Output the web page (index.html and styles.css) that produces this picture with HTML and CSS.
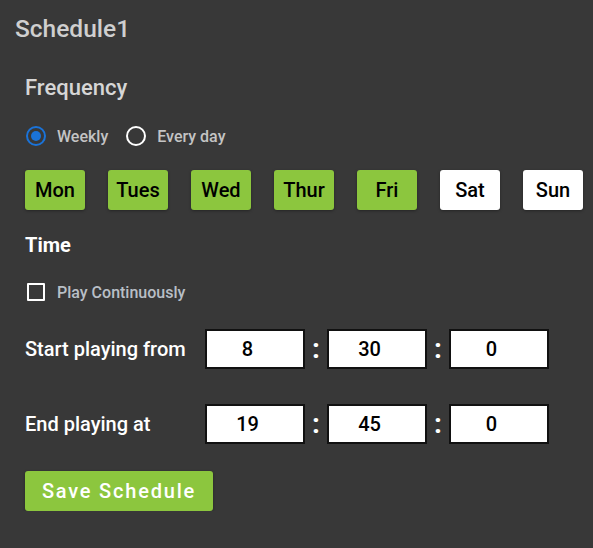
FILE: index.html
```html
<!DOCTYPE html>
<html>
<head>
<meta charset="utf-8">
<link rel="stylesheet" href="styles.css">
</head>
<body>
<div class="page">
  <h1 class="title">Schedule1</h1>
  <div class="content">
    <h2 class="section">Frequency</h2>
    <div class="radios">
      <label class="radio">
        <svg width="20" height="20" viewBox="0 0 20 20"><circle cx="10" cy="10" r="9" fill="none" stroke="#1a73d9" stroke-width="2"/><circle cx="10" cy="10" r="5" fill="#1a73d9"/></svg>
        <span>Weekly</span>
      </label>
      <label class="radio">
        <svg width="20" height="20" viewBox="0 0 20 20"><circle cx="10" cy="10" r="9" fill="none" stroke="#ffffff" stroke-width="2"/></svg>
        <span>Every day</span>
      </label>
    </div>
    <div class="days">
      <div class="day on">Mon</div>
      <div class="day on">Tues</div>
      <div class="day on">Wed</div>
      <div class="day on">Thur</div>
      <div class="day on">Fri</div>
      <div class="day">Sat</div>
      <div class="day">Sun</div>
    </div>
    <h3 class="time">Time</h3>
    <label class="check">
      <span class="box"></span>
      <span>Play Continuously</span>
    </label>
    <div class="row first">
      <div class="label">Start playing from</div>
      <div class="field">8</div><div class="colon">:</div>
      <div class="field">30</div><div class="colon">:</div>
      <div class="field">0</div>
    </div>
    <div class="row second">
      <div class="label">End playing at</div>
      <div class="field">19</div><div class="colon">:</div>
      <div class="field">45</div><div class="colon">:</div>
      <div class="field">0</div>
    </div>
    <button class="save">Save Schedule</button>
  </div>
</div>
</body>
</html>
```

FILE: styles.css
```css
html, body {
  margin: 0;
  padding: 0;
  background: #383838;
  font-family: Roboto, "Liberation Sans", sans-serif;
}
.page {
  padding: 15px 0 0 15px;
}
.title {
  margin: 0;
  font-size: 24.5px;
  line-height: 28px;
  font-weight: 500;
  color: #cfcfcf;
}
.content {
  padding-left: 10px;
}
.section {
  margin: 31px 0 0 0;
  font-size: 22px;
  line-height: 28px;
  font-weight: 500;
  color: #d6d6d6;
}
.radios {
  margin-top: 24px;
  display: flex;
  height: 20px;
  align-items: center;
  padding-left: 1px;
  gap: 18px;
}
.radio {
  display: flex;
  align-items: center;
  gap: 11px;
  font-size: 16px;
  font-weight: 500;
  color: #c4c4c4;
}
.radio svg { display: block; }
.days {
  margin-top: 24px;
  display: flex;
  gap: 23px;
}
.day {
  flex: 0 0 60px;
  width: 60px;
  height: 40px;
  line-height: 40px;
  text-align: center;
  border-radius: 3px;
  background: #ffffff;
  color: #000;
  font-size: 20px;
  font-weight: 500;
  box-shadow: 0 1px 3px rgba(0,0,0,0.35);
}
.day.on { background: #8cc63e; }
.time {
  margin: 23px 0 0 0;
  font-size: 20px;
  line-height: 24px;
  font-weight: 700;
  color: #ffffff;
}
.check {
  margin-top: 26px;
  display: flex;
  align-items: center;
  gap: 12px;
  height: 18px;
  padding-left: 2px;
  font-size: 16px;
  font-weight: 500;
  color: #b8bfc6;
}
.check .box {
  width: 14px;
  height: 14px;
  border: 2px solid #ffffff;
  border-radius: 1px;
}
.row {
  display: flex;
  align-items: center;
  height: 40px;
}
.row.first { margin-top: 28px; }
.row.second { margin-top: 35px; }
.label {
  flex: 0 0 180px;
  font-size: 20px;
  font-weight: 500;
  color: #ffffff;
}
.field {
  box-sizing: border-box;
  flex: 0 0 100px;
  height: 40px;
  line-height: 36px;
  border: 2px solid #111;
  background: #fff;
  color: #000;
  font-size: 20px;
  font-weight: 500;
  text-align: center;
  padding-right: 15px;
}
.colon {
  flex: 0 0 22px;
  text-align: center;
  font-size: 28px;
  font-weight: 700;
  color: #ffffff;
  line-height: 40px;
}
.save {
  margin-top: 27px;
  display: block;
  width: 188px;
  height: 40px;
  border: none;
  border-radius: 3px;
  background: #8cc63e;
  color: #ffffff;
  font-family: Roboto, "Liberation Sans", sans-serif;
  font-size: 20px;
  font-weight: 500;
  letter-spacing: 1.8px;
  padding: 0;
  box-shadow: 0 1px 3px rgba(0,0,0,0.35);
}
```
